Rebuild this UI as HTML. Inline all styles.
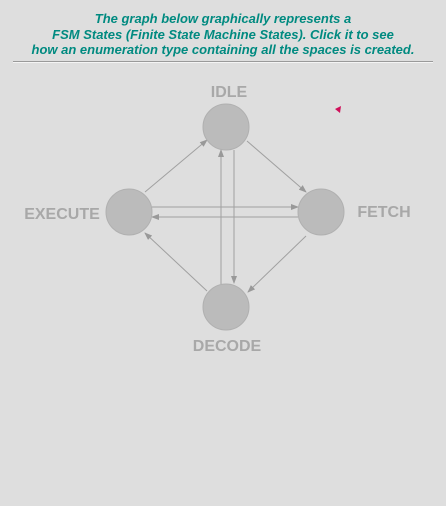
<!DOCTYPE html>
<html><head><meta charset="utf-8"><style>
html,body{margin:0;padding:0;background:#dedede;width:446px;height:506px;overflow:hidden}
.t{position:absolute;left:0;width:446px;text-align:center;color:#008a80;font:italic bold 13px "Liberation Sans",sans-serif;line-height:15.5px;top:11px}
.hr{position:absolute;left:13px;width:420px;top:61px;height:1px;background:#9a9a9a;border-bottom:1px solid #f4f4f4}
svg{position:absolute;left:0;top:0}
</style></head><body>
<div class="t">The graph below graphically represents a<br>FSM States (Finite State Machine States). Click it to see<br>how an enumeration type containing all the spaces is created.</div>
<div class="hr"></div>
<svg width="446" height="506" font-family="Liberation Sans,sans-serif" font-weight="bold" font-size="16">
<defs><marker id="a" markerWidth="8" markerHeight="6" refX="7" refY="3" orient="auto" markerUnits="userSpaceOnUse"><path d="M0,0L8,3L0,6z" fill="#999"/></marker></defs>
<g stroke="#a0a0a0" stroke-width="1" marker-end="url(#a)">
<line x1="247" y1="141" x2="306" y2="192"/>
<line x1="145" y1="192" x2="207" y2="140"/>
<line x1="306" y1="236" x2="248" y2="292"/>
<line x1="207" y1="291" x2="145" y2="233"/>
<line x1="152" y1="207" x2="298" y2="207"/>
<line x1="298" y1="217" x2="152" y2="217"/>
<line x1="234" y1="150" x2="234" y2="283"/>
<line x1="221" y1="284" x2="221" y2="150"/>
</g>
<g fill="#bbbbbb" stroke="#b0b0b0">
<circle cx="226" cy="127" r="23"/>
<circle cx="129" cy="212" r="23"/>
<circle cx="321" cy="212" r="23"/>
<circle cx="226" cy="307" r="23"/>
</g>
<g fill="#a8a8a8" text-anchor="middle">
<text x="229" y="97">IDLE</text>
<text x="62" y="219">EXECUTE</text>
<text x="384" y="217">FETCH</text>
<text x="227" y="351">DECODE</text>
</g>
<path d="M335,109L341,106L340,113z" fill="#d0105a"/>
</svg>
</body></html>
